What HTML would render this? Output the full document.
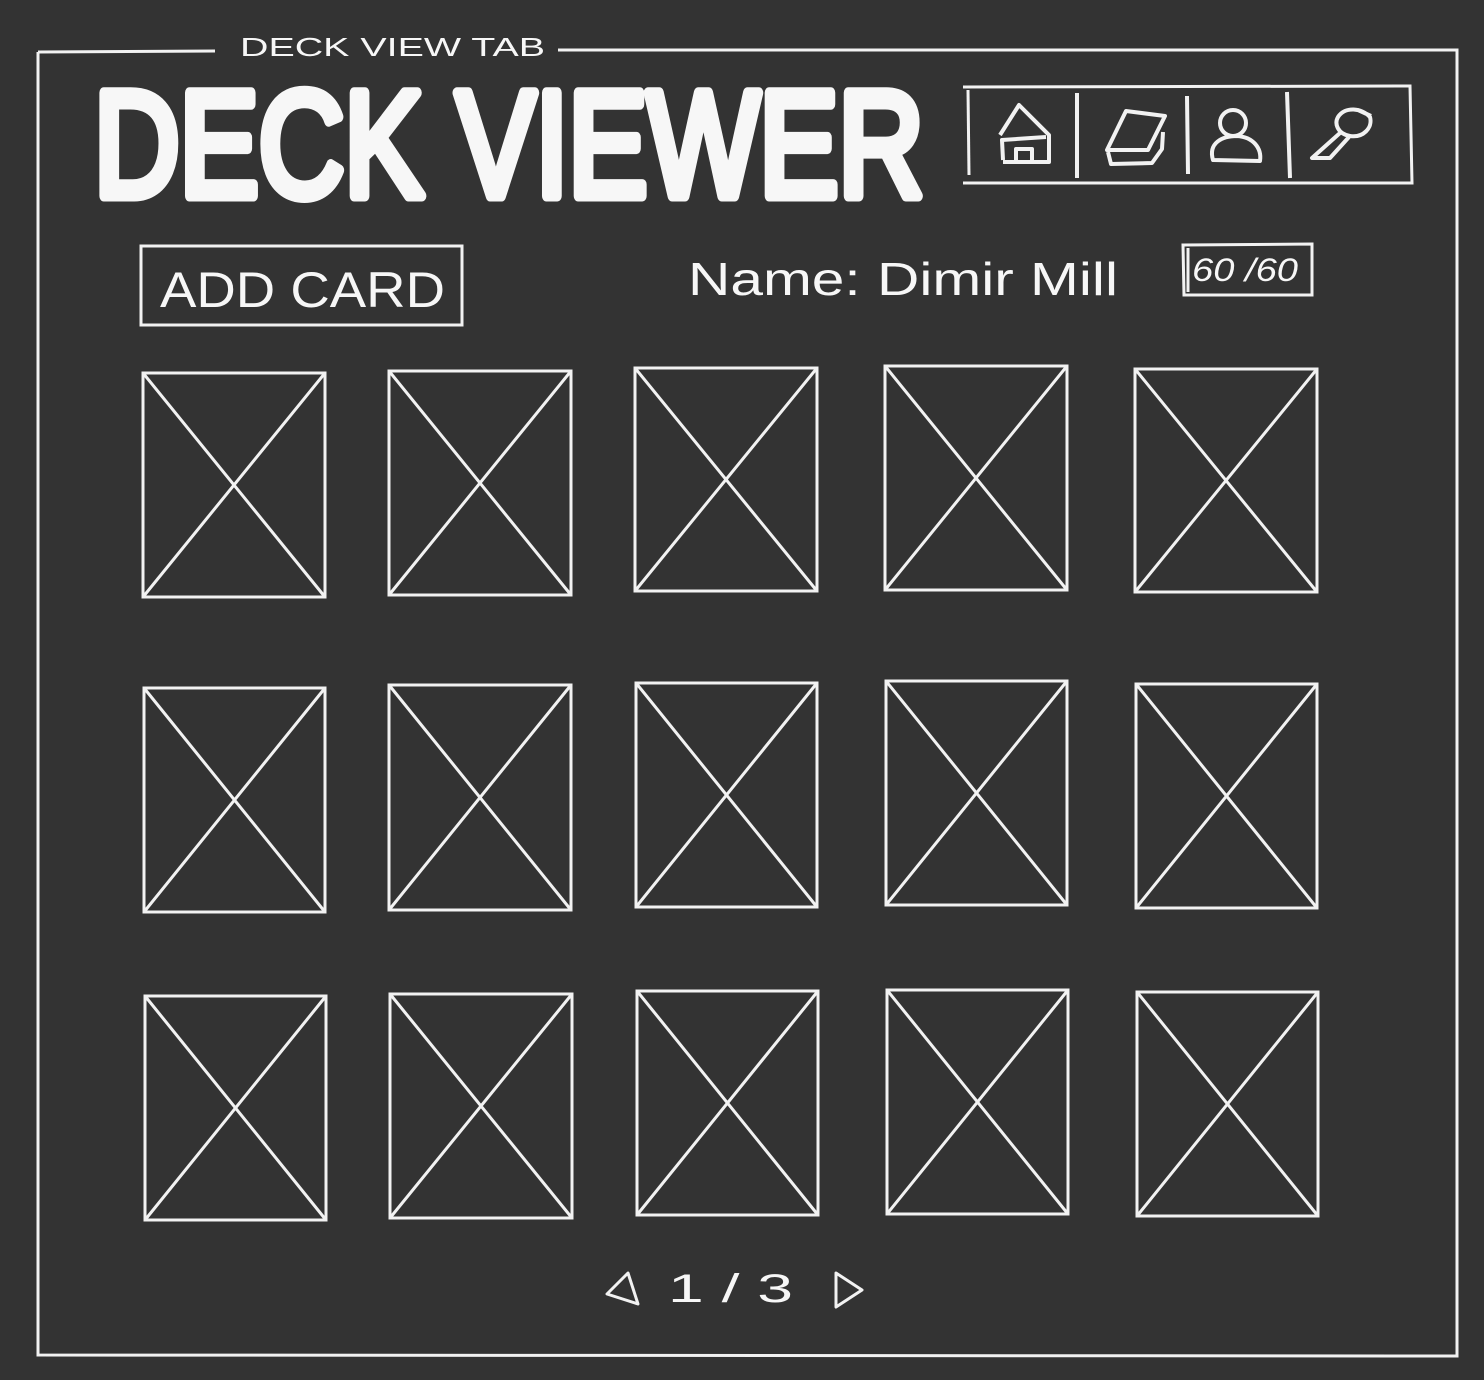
<!DOCTYPE html>
<html><head><meta charset="utf-8"><style>
html,body{margin:0;padding:0;background:#333;}
svg{display:block}
text{font-family:"Liberation Sans",sans-serif;fill:#f7f7f7}
</style></head><body>
<svg width="1484" height="1380" viewBox="0 0 1484 1380" xmlns="http://www.w3.org/2000/svg">
<rect width="1484" height="1380" fill="#333"/>
<g stroke="#f2f2f2" stroke-width="3" fill="none">
<path d="M38 52 L215 51 M558 50 L1457 50 L1457 1356 L38 1355 L38 52"/>
<path d="M963 87 L1410 86 L1412 183 L963 183"/>
<path d="M968 90 L969 175" />
<path d="M1077 93 L1077 178 M1187 96 L1188 174 M1287 92 L1290 178" stroke-width="4"/>
<path d="M1000 135 L1019 105 L1049 135 L1049 162 L1003 162 M1003 160 L1002 140 L1046 137 M1016 162 L1016 149 L1032 149 L1032 162" stroke-width="4" stroke-linejoin="round"/>
<path d="M1126 111 L1165 116 L1148 150 L1107 150 Z M1108 152 L1111 164 L1152 163 L1162 149 L1163 132" stroke-width="4" stroke-linejoin="round"/>
<circle cx="1233" cy="123" r="13" stroke-width="4"/>
<path d="M1213 160 C1208 143 1222 136 1237 136 C1253 137 1262 148 1260 161 Z" stroke-width="4" stroke-linejoin="round"/>
<path d="M1338 117 C1345 106 1362 108 1370 117 C1373 128 1363 138 1350 136 C1338 134 1334 124 1338 117 Z M1358 110 L1371 116 M1340 133 L1312 158 L1330 158 L1349 137" stroke-width="4" stroke-linejoin="round"/>
<rect x="141" y="246" width="321" height="79"/>
<path d="M1183 245 L1312 244 L1312 295 L1184 295 Z M1188 248 L1188 292"/>
<g stroke-width="3">
<path d="M143 373h182v224h-182z M143 373 L325 597 M325 373 L143 597"/>
<path d="M389 371h182v224h-182z M389 371 L571 595 M571 371 L389 595"/>
<path d="M635 368h182v223h-182z M635 368 L817 591 M817 368 L635 591"/>
<path d="M885 366h182v224h-182z M885 366 L1067 590 M1067 366 L885 590"/>
<path d="M1135 369h182v223h-182z M1135 369 L1317 592 M1317 369 L1135 592"/>
<path d="M144 688h181v224h-181z M144 688 L325 912 M325 688 L144 912"/>
<path d="M389 685h182v225h-182z M389 685 L571 910 M571 685 L389 910"/>
<path d="M636 683h181v224h-181z M636 683 L817 907 M817 683 L636 907"/>
<path d="M886 681h181v224h-181z M886 681 L1067 905 M1067 681 L886 905"/>
<path d="M1136 684h181v224h-181z M1136 684 L1317 908 M1317 684 L1136 908"/>
<path d="M145 996h181v224h-181z M145 996 L326 1220 M326 996 L145 1220"/>
<path d="M390 994h182v224h-182z M390 994 L572 1218 M572 994 L390 1218"/>
<path d="M637 991h181v224h-181z M637 991 L818 1215 M818 991 L637 1215"/>
<path d="M887 990h181v224h-181z M887 990 L1068 1214 M1068 990 L887 1214"/>
<path d="M1137 992h181v224h-181z M1137 992 L1318 1216 M1318 992 L1137 1216"/>
</g>
<path d="M628 1273 L607 1294 L638 1304 Z M836 1273 L862 1290 L836 1307 Z" stroke-width="3" stroke-linejoin="round"/>
</g>
<text x="94" y="196" font-size="150" stroke="#f7f7f7" stroke-width="11" stroke-linejoin="round" stroke-linecap="round" textLength="830" lengthAdjust="spacingAndGlyphs">DECK VIEWER</text>
<text x="240" y="56" font-size="26" textLength="305" lengthAdjust="spacingAndGlyphs">DECK VIEW TAB</text>
<text x="160" y="307" font-size="50" textLength="285" lengthAdjust="spacingAndGlyphs">ADD CARD</text>
<text x="688" y="295" font-size="46" textLength="430" lengthAdjust="spacingAndGlyphs">Name:  Dimir  Mill</text>
<text x="1192" y="281" font-size="32" font-style="italic" textLength="106" lengthAdjust="spacingAndGlyphs">60 /60</text>
<text x="668" y="1302" font-size="40" textLength="125" lengthAdjust="spacingAndGlyphs">1 / 3</text>
</svg>
</body></html>
